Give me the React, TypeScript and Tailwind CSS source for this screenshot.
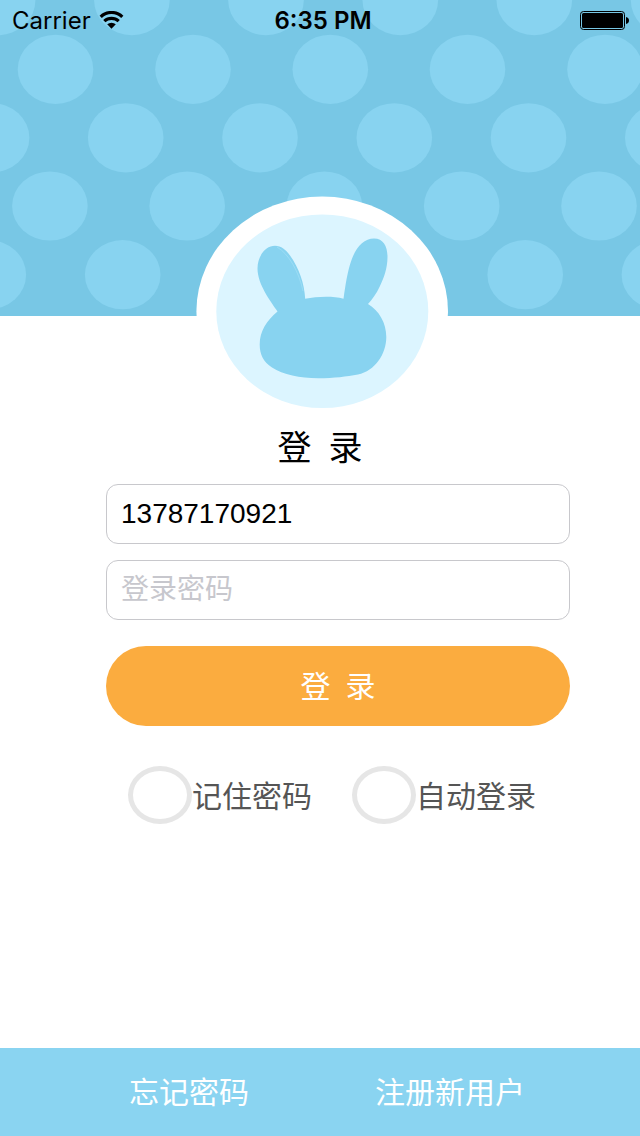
import { useState } from 'react';

const dotRows = [
  { cy: 0.6, xs: [-2.4, 131.9, 266, 400.3, 534.3, 668.6] },
  { cy: 69.3, xs: [55.5, 193, 330.3, 467.5, 605] },
  { cy: 137.8, xs: [-8.4, 125.7, 260, 394.3, 528.5, 662.8] },
  { cy: 206, xs: [49.9, 187.2, 324.4, 461.7, 599] },
  { cy: 274.7, xs: [-11.7, 122.7, 257, 391, 525.2, 659.4] },
];

function DotPattern() {
  return (
    <svg
      className="absolute inset-0 h-full w-full"
      viewBox="0 0 640 316"
      preserveAspectRatio="xMidYMin slice"
      aria-hidden="true"
    >
      {dotRows.map((row) =>
        row.xs.map((x) => (
          <ellipse key={`${row.cy}-${x}`} cx={x} cy={row.cy} rx="37.8" ry="34.6" fill="#88d3f0" />
        )),
      )}
    </svg>
  );
}

function WifiIcon() {
  return (
    <svg className="h-5 w-[26px]" viewBox="0 1 26 20" aria-hidden="true">
      <g fill="none" stroke="#000" strokeWidth="3.2">
        <path d="M1.7 6.8a15.6 15.6 0 0 1 21.6 0" />
        <path d="M5.3 11.100a10.6 10.6 0 0 1 14.4 0" />
      </g>
      <path d="M8.2 14.3a6.4 6.4 0 0 1 8.600 0L12.5 18.800z" fill="#000" />
    </svg>
  );
}

function BatteryIcon() {
  return (
    <svg className="h-5 w-[50px]" viewBox="0 1 50 20" aria-hidden="true">
      <rect x="0.5" y="1.5" width="44" height="18" rx="3" fill="none" stroke="#000" />
      <rect x="2" y="3" width="41" height="15" rx="1.5" fill="#000" />
      <path d="M46 7c2 .4 3 1.800 3 3.500s-1 3.100-3 3.500z" fill="#000" />
    </svg>
  );
}

function StatusBar() {
  return (
    <div className="relative grid h-[42px] grid-cols-3 items-center pl-3 pr-[10px] font-['Inter',sans-serif] text-2xl text-black">
      <div className="flex items-center gap-2">
        <span>Carrier</span>
        <WifiIcon />
      </div>
      <time className="pl-1 text-center font-semibold">6:35 PM</time>
      <div className="flex justify-end">
        <BatteryIcon />
      </div>
    </div>
  );
}

function Avatar() {
  return (
    <svg className="relative -mt-[120px] h-[230px] w-[256px]" viewBox="192 196 256 230" role="img" aria-label="兔子">
      <ellipse cx="322.2" cy="311.500" rx="125.800" ry="115" fill="#fff" />
      <ellipse cx="322.3" cy="311.3" rx="106" ry="96.800" fill="#dcf5ff" />
      <path
        fill="#88d3f0"
        d="M277.500 311.500C270 300.500 257.500 284 257.500 268.500C257.500 256 265.500 245.800 275 245.800C281 245.800 286 250 290 255.500C299 268 304.500 284 305.200 298.700C317 296.300 333 295.700 343.500 298.700C345.500 285 347.500 271 351.500 260C356 247 364 238.500 374 238.500C383.500 238.500 387.500 246.500 387.500 257C387.500 268 384 278 379.500 287C376.500 293.500 372.500 299 368 304C379 310.500 386.300 323 386.300 337C386.300 354 375 371 358 374.500C346 376.500 335 378.300 318 378.300C300 378.300 283 374.500 272 367.500C263.500 362 259.700 354.500 259.700 344.500C259.700 331 266.500 321 277.500 311.500Z"
      />
      <path
        d="M277 247c12 7 22 25 26 44"
        fill="none"
        stroke="#a3dff6"
        strokeWidth="0.7"
      />
    </svg>
  );
}

function Option({ label }: { label: string }) {
  return (
    <label className="flex items-center text-3xl text-[#555]">
      <input
        type="checkbox"
        className="h-[58px] w-16 appearance-none rounded-[50%] border-[5px] border-[#e6e6e6] bg-white checked:bg-[#fbac3f]"
      />
      <span className="pt-1">{label}</span>
    </label>
  );
}

export default function App() {
  const [phone, setPhone] = useState('13787170921');
  const [password, setPassword] = useState('');
  const field =
    "h-[60px] w-full rounded-xl border border-[#c8c8cc] bg-white px-[14px] text-[28px] text-black outline-none placeholder:text-[#c7c7cd]";

  return (
    <div className="flex min-h-screen flex-col bg-white font-['Roboto','Noto_Sans_CJK_SC',sans-serif]">
      <header className="relative h-[316px] overflow-hidden bg-[#78c7e5]">
        <DotPattern />
        <StatusBar />
      </header>
      <main className="flex flex-col items-center">
        <Avatar />
        <h1 className="whitespace-pre text-[34px] leading-[44px]">{'登  录'}</h1>
        <form className="w-full pl-[106px] pr-[70px] pt-[14px]" onSubmit={(e) => e.preventDefault()}>
          <div className="flex flex-col gap-4 font-['Liberation_Sans','Noto_Sans_CJK_SC',sans-serif]">
            <input
              type="tel"
              aria-label="手机号"
              className={field}
              value={phone}
              onChange={(e) => setPhone(e.target.value)}
            />
            <input
              type="password"
              aria-label="登录密码"
              placeholder="登录密码"
              className={field}
              value={password}
              onChange={(e) => setPassword(e.target.value)}
            />
          </div>
          <button
            type="submit"
            className="mt-[26px] h-20 w-full whitespace-pre rounded-full bg-[#fbac3f] pt-[2px] text-3xl text-white"
          >
            {'登  录'}
          </button>
          <div className="mt-10 flex gap-10 pl-[22px]">
            <Option label="记住密码" />
            <Option label="自动登录" />
          </div>
        </form>
      </main>
      <footer className="mt-auto flex h-[88px] items-center justify-center gap-[126px] bg-[#8ad4f1] pl-[14px] pt-[2px] text-3xl text-white">
        <a href="#forgot">忘记密码</a>
        <a href="#register">注册新用户</a>
      </footer>
    </div>
  );
}
